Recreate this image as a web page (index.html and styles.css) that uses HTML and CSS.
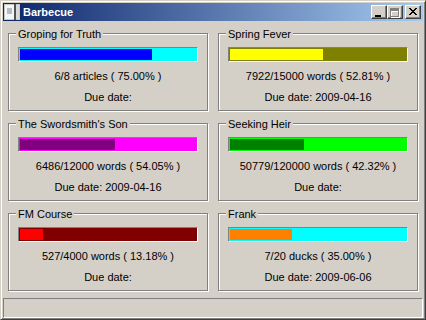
FILE: index.html
```html
<!DOCTYPE html>
<html>
<head>
<meta charset="utf-8"/>
<title>Barbecue</title>
<link rel="stylesheet" href="styles.css">
</head>
<body>

<div class="window">

<div class="titlebar">
  <svg class="appicon" width="16" height="16" viewBox="0 0 16 16" shape-rendering="crispEdges">
    <rect x="0" y="0" width="16" height="16" fill="#c8c8c8"/>
    <rect x="1" y="1" width="9" height="14" fill="#f4f4f4"/>
    <rect x="10" y="0" width="2" height="16" fill="#505050"/>
    <rect x="12" y="1" width="3" height="14" fill="#d8d8d8"/>
    <rect x="3" y="4" width="5" height="6" fill="#b4bccc"/>
  </svg>
  <span class="title">Barbecue</span>
  <div class="captionbtns">
    <div class="cbtn">
      <svg width="14" height="12" viewBox="0 0 14 12" shape-rendering="crispEdges">
        <rect x="3" y="9" width="6" height="2" fill="#000"/>
      </svg>
    </div>
    <div class="cbtn">
      <svg width="14" height="12" viewBox="0 0 14 12" shape-rendering="crispEdges">
        <path fill="#fff" d="M3 3h9v9h-9z M4 6v5h7v-5z" fill-rule="evenodd"/>
        <path fill="#808080" d="M2 2h9v9h-9z M3 5v5h7v-5z" fill-rule="evenodd"/>
      </svg>
    </div>
    <div class="cbtn close">
      <svg width="14" height="12" viewBox="0 0 14 12" shape-rendering="crispEdges">
        <path fill="#000" transform="translate(3,2)" d="M0 0h2v1h-2z M6 0h2v1h-2z M1 1h2v1h-2z M5 1h2v1h-2z M2 2h4v1h-4z M3 3h2v1h-2z M2 4h4v1h-4z M1 5h2v1h-2z M5 5h2v1h-2z M0 6h2v1h-2z M6 6h2v1h-2z"/>
      </svg>
    </div>
  </div>
</div>

<div class="client">

  <div class="goal">
    <div class="goal-name">Groping for Truth</div>
    <div class="bar bar-blue"><div class="fill" style="width:75%"></div></div>
    <div class="line">6/8 articles ( 75.00% )</div>
    <div class="line">Due date:</div>
  </div>

  <div class="goal">
    <div class="goal-name">Spring Fever</div>
    <div class="bar bar-yellow"><div class="fill" style="width:52.81%"></div></div>
    <div class="line">7922/15000 words ( 52.81% )</div>
    <div class="line">Due date: 2009-04-16</div>
  </div>

  <div class="goal">
    <div class="goal-name">The Swordsmith's Son</div>
    <div class="bar bar-purple"><div class="fill" style="width:54.05%"></div></div>
    <div class="line">6486/12000 words ( 54.05% )</div>
    <div class="line">Due date: 2009-04-16</div>
  </div>

  <div class="goal">
    <div class="goal-name">Seeking Heir</div>
    <div class="bar bar-green"><div class="fill" style="width:42.32%"></div></div>
    <div class="line">50779/120000 words ( 42.32% )</div>
    <div class="line">Due date:</div>
  </div>

  <div class="goal">
    <div class="goal-name">FM Course</div>
    <div class="bar bar-red"><div class="fill" style="width:13.18%"></div></div>
    <div class="line">527/4000 words ( 13.18% )</div>
    <div class="line">Due date:</div>
  </div>

  <div class="goal">
    <div class="goal-name">Frank</div>
    <div class="bar bar-orange"><div class="fill" style="width:35%"></div></div>
    <div class="line">7/20 ducks ( 35.00% )</div>
    <div class="line">Due date: 2009-06-06</div>
  </div>

</div>

<div class="statusbar"></div>

</div>

</body>
</html>
```

FILE: styles.css
```css
body {
  margin: 0px;
  padding: 0px;
  background: #d4d0c8;
  font-family: "Liberation Sans", Arial, sans-serif;
  font-size: 11px;
  color: #000;
}

/* the outer window frame, classic 3d look */
div.window {
  box-sizing: border-box;
  width: 426px;
  height: 320px;
  border: 1px solid;
  border-color: #d4d0c8 #404040 #404040 #d4d0c8;
  box-shadow: inset 1px 1px #fff, inset -1px -1px #808080;
  padding: 2px 2px 1px 2px;
  display: flex;
  flex-direction: column;
}

.titlebar {
  height: 18px;
  flex: none;
  display: flex;
  align-items: center;
  background: linear-gradient(to right, #0a246a, #a6caf0);
}

.appicon {
  display: block;
  margin-left: 1px;
}

.title {
  margin-left: 3px;
  color: #fff;
  font-weight: bold;
  font-size: 11px;
  line-height: 18px;
}

.captionbtns {
  margin-left: auto;
  margin-right: 2px;
  display: flex;
}

.cbtn {
  box-sizing: border-box;
  width: 16px;
  height: 14px;
  background: #d4d0c8;
  border: 1px solid;
  border-color: #fff #404040 #404040 #fff;
  box-shadow: inset -1px -1px #808080;
}
.cbtn svg {
  display: block;
}
.cbtn.close {
  margin-left: 2px;
}

/* grid of goal boxes */
.client {
  flex: 1;
  padding: 12px 5px 0px 5px;
  display: grid;
  grid-template-columns: 200px 200px;
  grid-template-rows: 78px 78px 78px;
  column-gap: 10px;
  row-gap: 12px;
  align-content: start;
}

.goal {
  box-sizing: border-box;
  border: 1px solid #808080;
  box-shadow: inset 1px 1px #fff, 1px 1px #fff;
  text-align: center;
}

.goal-name {
  width: fit-content;
  margin: -6px 0px 0px 7px;
  padding: 0px 2px;
  background: #d4d0c8;
  line-height: 13px;
  white-space: nowrap;
}

.bar {
  height: 15px;
  box-sizing: border-box;
  margin: 6px 9px 0px 9px;
  border: 1px solid;
  border-color: #808080 #fff #fff #808080;
  padding: 1px;
}
.bar .fill {
  height: 100%;
}

.bar-blue { background: #00ffff; }
.bar-blue .fill { background: #0000ff; }
.bar-yellow { background: #808000; }
.bar-yellow .fill { background: #ffff00; }
.bar-purple { background: #ff00ff; }
.bar-purple .fill { background: #800080; }
.bar-green { background: #00ff00; }
.bar-green .fill { background: #008000; }
.bar-red { background: #800000; }
.bar-red .fill { background: #ff0000; }
.bar-orange { background: #00ffff; }
.bar-orange .fill { background: #ff8000; }

.line {
  margin-top: 8px;
  line-height: 13px;
  white-space: nowrap;
}

.statusbar {
  margin-top: 7px;
  height: 20px;
  box-sizing: border-box;
  flex: none;
  border: 1px solid;
  border-color: #808080 #fff #fff #808080;
}
```
